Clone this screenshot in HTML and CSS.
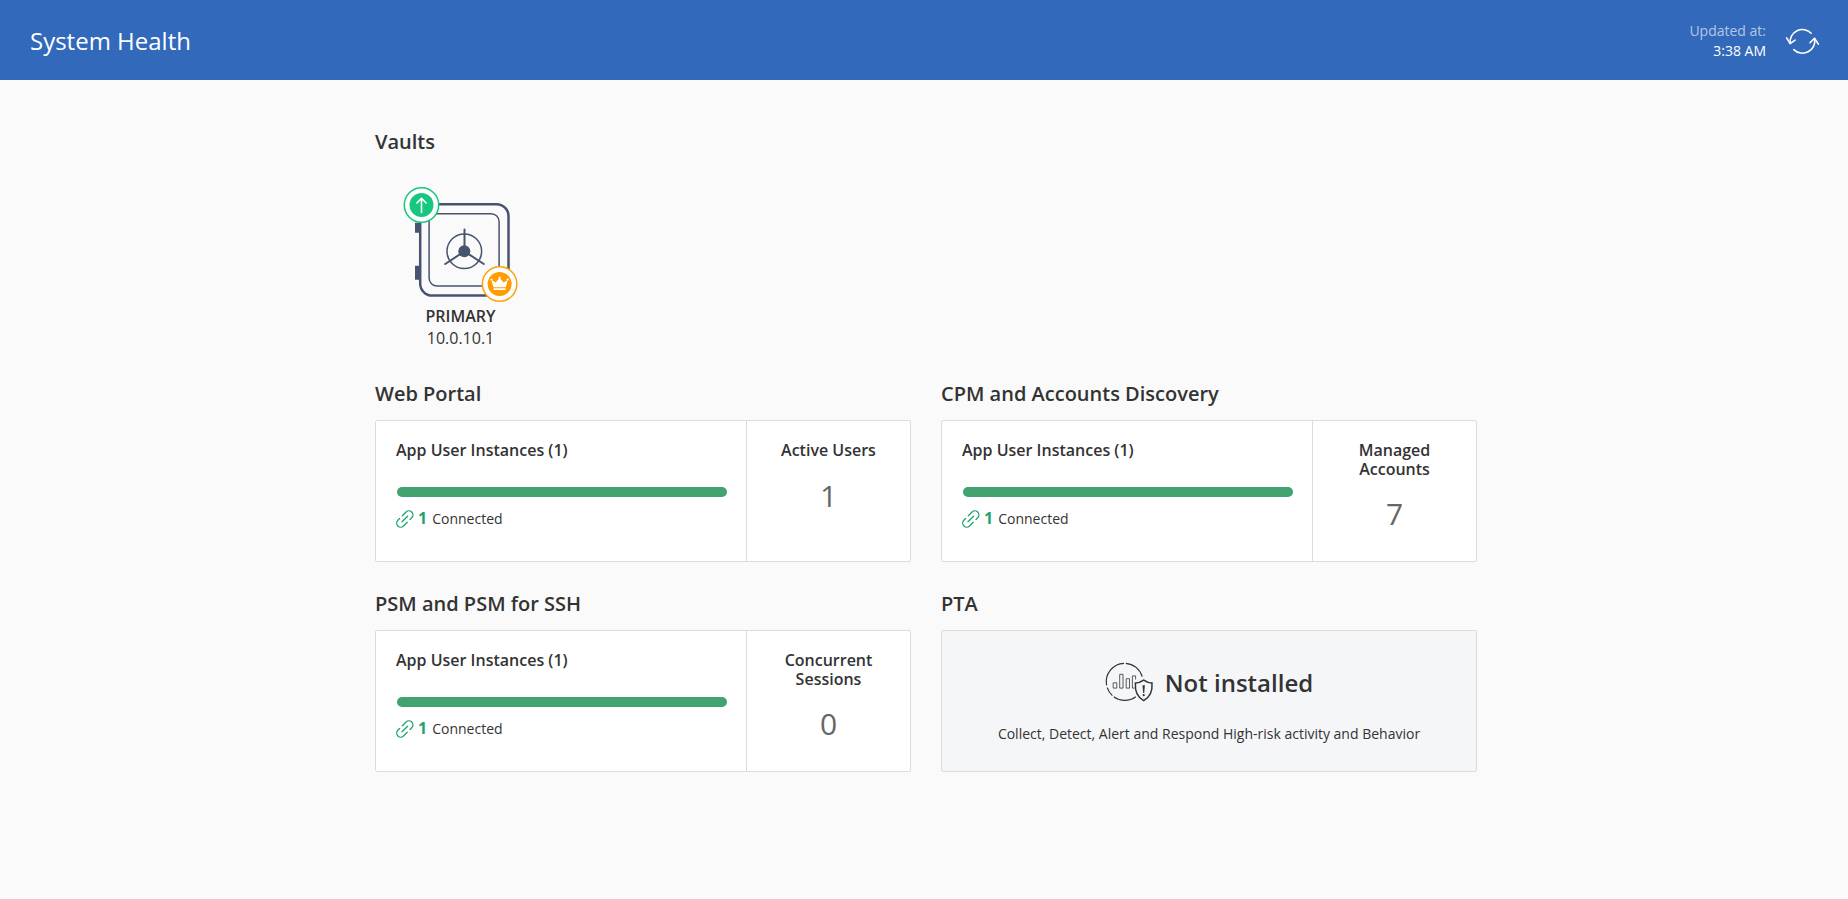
FILE: index.html
```html
<!DOCTYPE html>
<html lang="en">
<head>
<meta charset="utf-8">
<title>System Health</title>
<link rel="stylesheet" href="styles.css">
</head>
<body>
<svg width="0" height="0" class="defs">
  <symbol id="link" viewBox="0 0 18 18">
    <g transform="translate(8.8 9) rotate(-45)" fill="none" stroke="#1fa36e" stroke-width="1.3" stroke-linecap="round">
      <path d="M.6-4H5.8a4 4 0 0 1 0 8H3.4"/>
      <path d="M-.6 4H-5.8a4 4 0 0 1 0-8H-3.4"/>
      <path d="M-4 0H4"/>
    </g>
  </symbol>
</svg>
<header class="topbar">
  <h1 class="topbar-title">System Health</h1>
  <div class="updated">
    <div class="updated-label">Updated at:</div>
    <div class="updated-time">3:38 AM</div>
  </div>
  <svg class="refresh" width="36" height="36" viewBox="0 0 36 36" fill="none" stroke="#fff" stroke-width="1.6" stroke-linecap="round" stroke-linejoin="round">
    <path d="M6.2 20.4A12.3 12.3 0 0 1 27.2 10.2"/>
    <path d="M2.6 14.9L6.1 20.6L11.1 17.2"/>
    <path d="M30.6 15.8A12.3 12.3 0 0 1 9.8 26.6"/>
    <path d="M26 19.8L30.5 15.2L34.4 21.1"/>
  </svg>
</header>
<main class="content">
  <h2 class="section-title">Vaults</h2>
  <div class="vault">
    <svg class="vault-icon" width="120" height="124" viewBox="0 0 120 124">
      <g fill="none" stroke="#47536f">
        <path d="M15 42.7h5v10h-5zM15 85.7h5v14h-5z" fill="#47536f" stroke="none"/>
        <rect x="20.2" y="24.2" width="88.3" height="91.4" rx="12" stroke-width="2.5"/>
        <rect x="29.1" y="33.7" width="70" height="72.3" rx="8" stroke-width="1.5"/>
        <circle cx="64.3" cy="71.3" r="17.3" stroke-width="1.5"/>
        <path d="M64.5 49.5V71.3L45.2 84M64.3 71.3L83.8 84" stroke-width="2" stroke-linecap="round"/>
      </g>
      <circle cx="64.3" cy="71.3" r="6" fill="#47536f"/>
      <circle cx="21.5" cy="25" r="17.2" fill="#fff" stroke="#17c77f" stroke-width="1.5"/>
      <circle cx="21.5" cy="25" r="12" fill="#17c77f"/>
      <path d="M21.5 32.5V18.6M16.9 23L21.5 18.3L26.1 23" fill="none" stroke="#fff" stroke-width="1.6" stroke-linecap="round" stroke-linejoin="round"/>
      <circle cx="99.6" cy="104" r="17.2" fill="#fff" stroke="#ffa10a" stroke-width="1.5"/>
      <circle cx="99.6" cy="104" r="12" fill="#ff9c00"/>
      <path d="M93.4 107.2L91.5 100L95.6 102.6L99.6 98L103.6 102.6L107.7 100L105.8 107.2zM93.6 108.2h12v1.8h-12z" fill="#fff"/>
      <g fill="#fff"><circle cx="91.5" cy="99.6" r="1.1"/><circle cx="99.6" cy="97.8" r="1.1"/><circle cx="107.7" cy="99.6" r="1.1"/></g>
    </svg>
    <div class="vault-name">PRIMARY</div>
    <div class="vault-ip">10.0.10.1</div>
  </div>
  <div class="grid">
    <section>
      <h2 class="section-title">Web Portal</h2>
      <div class="card">
        <div class="instances">
          <h3 class="card-title">App User Instances (1)</h3>
          <div class="bar"></div>
          <div class="status"><svg width="18" height="18"><use href="#link"/></svg><span class="count">1</span><span>Connected</span></div>
        </div>
        <div class="metric"><h3 class="card-title">Active Users</h3><div class="value">1</div></div>
      </div>
    </section>
    <section>
      <h2 class="section-title">CPM and Accounts Discovery</h2>
      <div class="card">
        <div class="instances">
          <h3 class="card-title">App User Instances (1)</h3>
          <div class="bar"></div>
          <div class="status"><svg width="18" height="18"><use href="#link"/></svg><span class="count">1</span><span>Connected</span></div>
        </div>
        <div class="metric"><h3 class="card-title">Managed Accounts</h3><div class="value">7</div></div>
      </div>
    </section>
    <section>
      <h2 class="section-title">PSM and PSM for SSH</h2>
      <div class="card">
        <div class="instances">
          <h3 class="card-title">App User Instances (1)</h3>
          <div class="bar"></div>
          <div class="status"><svg width="18" height="18"><use href="#link"/></svg><span class="count">1</span><span>Connected</span></div>
        </div>
        <div class="metric"><h3 class="card-title">Concurrent Sessions</h3><div class="value">0</div></div>
      </div>
    </section>
    <section>
      <h2 class="section-title">PTA</h2>
      <div class="card card-empty">
        <div class="empty-head">
          <svg width="50" height="42" viewBox="0 0 50 42" fill="none" stroke="#333" stroke-width="1.2">
            <path d="M21.8 2.3A18.5 18.5 0 0 1 38.2 15.6M20 2.3A18.5 18.5 0 0 0 2.6 24.4M3.2 26.6A18.5 18.5 0 0 0 8.4 34.6M9.8 35.8A18.5 18.5 0 0 0 31.8 35.8"/>
            <path d="M9.2 21.8h3.6v5.3H9.2zM15.7 13.3h3.3v13.8h-3.3zM22.2 17.7h3.3v9.4h-3.3zM31.6 18.5V14.9H28.4V27.1H30.4" stroke-width=".8"/>
            <path d="M39.7 19.2Q35.6 22 31.4 22.1Q30.4 34.4 39.7 39.7Q49 34.4 48 22.1Q43.8 22 39.7 19.2z" stroke-width="1.5"/>
            <path d="M38.5 24.2h2.4l-.7 7.7h-1z" fill="#333" stroke="none"/>
            <circle cx="39.7" cy="34.2" r="1.1" fill="#333" stroke="none"/>
          </svg>
          <span>Not installed</span>
        </div>
        <p class="empty-text">Collect, Detect, Alert and Respond High-risk activity and Behavior</p>
      </div>
    </section>
  </div>
</main>
</body>
</html>
```
FILE: styles.css
```css
* { box-sizing: border-box; }
body {
  margin: 0;
  background: #fafafa;
  color: #333;
  font-family: "Open Sans", "Noto Sans", sans-serif;
  font-size: 14px;
}
h1, h2, h3, p { margin: 0; }
.defs { display: none; }
.topbar {
  display: flex;
  align-items: center;
  height: 80px;
  padding: 0 28px 0 30px;
  background: #3269ba;
  color: #fff;
}
.topbar-title { flex: 1; padding-top: 1px; font-size: 24px; font-weight: 400; line-height: 32px; }
.updated { padding-top: 1px; text-align: right; line-height: 20px; }
.updated-label { color: #b3c8e6; }
.updated-time { font-weight: 500; }
.refresh { margin-left: 18px; margin-top: 2px; }
.content { width: 1102px; margin-left: 375px; padding-top: 48px; }
.section-title { font-size: 20px; font-weight: 600; line-height: 28px; }
.vault {
  display: flex;
  flex-direction: column;
  align-items: center;
  width: 171px;
  margin-top: 24px;
  font-size: 16px;
  line-height: 22px;
}
.vault-name { margin-top: 1px; font-weight: 600; }
.vault-icon { margin-left: -1px; }
.grid {
  display: grid;
  grid-template-columns: 536px 536px;
  gap: 28px 30px;
  margin-top: 31px;
}
.card {
  display: flex;
  height: 142px;
  margin-top: 12px;
  border: 1px solid #dadcdd;
  border-radius: 2px;
  background: #fff;
}
.instances { flex: 1; padding: 20px 19px 0 20px; }
.metric {
  width: 164px;
  padding: 20.3px 30px 0;
  border-left: 1px solid #dadcdd;
  text-align: center;
}
.card-title { font-size: 16px; font-weight: 600; line-height: 18.8px; }
.bar { height: 10px; margin: 27.2px 0 0 1px; border-radius: 5px; background: #42a371; }
.status { display: flex; align-items: center; height: 24px; margin-top: 10px; line-height: 20px; }
.count { margin: 0 5px 2px 4px; color: #1fa36e; font-size: 16px; font-weight: 700; }
.value { margin-top: 14.6px; color: #666; font-size: 30px; line-height: 41px; }
.card-empty { flex-direction: column; align-items: center; background: #f5f6f8; }
.empty-head {
  display: flex;
  align-items: center;
  gap: 11px;
  height: 42px;
  margin-top: 30px;
  padding-right: 1px;
  font-size: 24px;
  font-weight: 600;
}
.empty-text { margin-top: 21px; line-height: 20px; }
```
